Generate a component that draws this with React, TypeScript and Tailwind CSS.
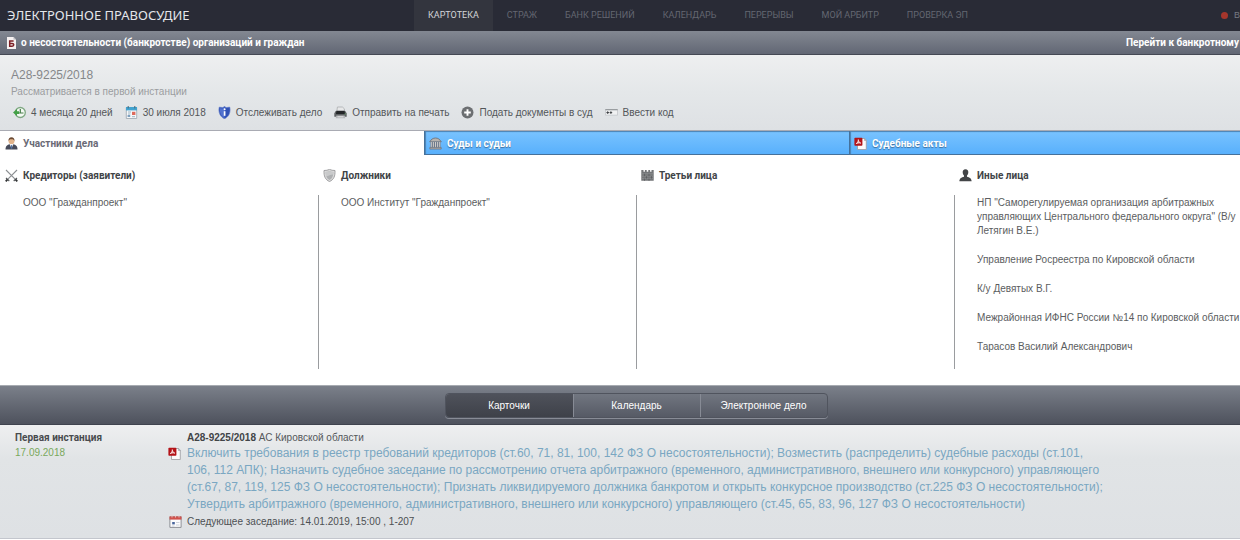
import type { ReactNode } from 'react'
import clsx from 'clsx'

const NAV = ['КАРТОТЕКА', 'СТРАЖ', 'БАНК РЕШЕНИЙ', 'КАЛЕНДАРЬ', 'ПЕРЕРЫВЫ', 'МОЙ АРБИТР', 'ПРОВЕРКА ЭП']

function Icon({ children, className }: { children: ReactNode; className?: string }) {
  return (
    <svg viewBox="0 0 13 13" aria-hidden="true" className={clsx('h-[13px] w-[13px] shrink-0', className)}>
      {children}
    </svg>
  )
}

function BankruptIcon() {
  return (
    <svg viewBox="0 0 9 12" aria-hidden="true" className="h-3 w-[9px] shrink-0">
      <path d="M0 0h6.5L9 2.5V12H0z" fill="#f6f1f1" />
      <path d="M6.5 0L9 2.5H6.5z" fill="#b9b9c0" />
      <path d="M6.6 3.9H2.7v5.3h2.4c2.2 0 2.2-2.8 0-2.8H2.7" fill="none" stroke="#7d2026" strokeWidth="1.5" />
    </svg>
  )
}

function HistoryIcon() {
  return (
    <Icon>
      <circle cx="7.3" cy="6.5" r="5" fill="#f4faf4" stroke="#7fa882" strokeWidth="1.3" />
      <path d="M7.3 3v4.5M5.5 7h5" fill="none" stroke="#467d49" strokeWidth="1.2" />
      <path d="M0 6.5L4 3v2.2h2v2.7H4V10z" fill="#43a047" />
    </Icon>
  )
}

function DateIcon() {
  return (
    <Icon>
      <path d="M1.3 1.5h10.4v11H1.3z" fill="#f5f7f9" stroke="#9aa4ad" strokeWidth="0.8" />
      <path d="M1 1h11v3.4H1z" fill="#42a3cf" />
      <path d="M3.2 0v2.4M9.8 0v2.4" stroke="#4c6675" strokeWidth="1" />
      <path d="M3 6h3M3 8h2.4M7 10.7h3" stroke="#9db4c3" strokeWidth="1" />
      <path d="M7 5.8h3.4V9H7z" fill="#dd6a5c" />
      <path d="M2.6 9h2.6v2H2.6z" fill="#7d9fbe" />
    </Icon>
  )
}

function GuardIcon() {
  return (
    <Icon>
      <path d="M6.5.3L8 1.6l3.8-.5C13 6.5 10.7 11 6.5 12.8 2.3 11 0 6.5 1.2 1.1L5 1.6z" fill="#3152b5" stroke="#6b84cf" strokeWidth="0.6" />
      <path d="M6.5 1v11C3.3 10.6 1.5 7 2 2.2l3 .4z" fill="#5272cf" />
      <path d="M6.6 5.2v4.6" fill="none" stroke="#fff" strokeWidth="1.7" />
      <circle cx="6.6" cy="3.3" r="1" fill="#fff" />
    </Icon>
  )
}

function PrinterIcon() {
  return (
    <Icon>
      <path d="M3.4 1h5l2 1.8v3H2.8z" fill="#e6e7e8" stroke="#a5a7a9" strokeWidth="0.7" />
      <path d="M1.4 5.2h10.2l1.1 2.2v3.4H.3V7.4z" fill="#5f6264" />
      <path d="M2.4 4.8h8.2l.4 3.2H2z" fill="#242628" />
      <path d="M2.4 9.4h8.2l.7 2.8H1.7z" fill="#b5b7ba" />
      <path d="M3.6 10.8h5.8" stroke="#e7e7e7" strokeWidth="0.9" />
      <path d="M10.6 8h1.2" stroke="#68b46a" strokeWidth="0.8" />
    </Icon>
  )
}

function AddIcon() {
  return (
    <Icon>
      <circle cx="6.5" cy="6.5" r="6" fill="#6c6f72" />
      <path d="M6.5 3.2v6.6M3.2 6.5h6.6" stroke="#fff" strokeWidth="1.9" />
    </Icon>
  )
}

function CodeIcon() {
  return (
    <Icon>
      <path d="M.5 3.8h12v5.4H.5z" fill="#f0f1f2" stroke="#c4c7ca" strokeWidth="0.8" />
      <path d="M.3 3.7h12.4" stroke="#85888b" strokeWidth="0.9" />
      <path d="M1.4 6.6H4M4.6 6.6h2.6M2.7 5.3v2.6M5.9 5.3v2.6" stroke="#3f4245" strokeWidth="1" />
    </Icon>
  )
}

function PersonIcon() {
  return (
    <Icon>
      <path d="M.5 12.5c0-3.5 2-4.8 4-5.2h4c2 .4 4 1.7 4 5.2z" fill="#474b5a" />
      <path d="M4.6 7l1.9 4.5L8.4 7z" fill="#f3f3f5" />
      <path d="M6.1 8h.8l.5 3.6h-1.8z" fill="#4f74a8" />
      <circle cx="6.5" cy="4.2" r="2.9" fill="#e3b58c" />
      <path d="M3.5 4.3C3.2 1.4 4.6.3 6.5.3s3.3 1.1 3 4c-.6-1.5-1.2-2-3-2s-2.4.5-3 2z" fill="#6b4a33" />
    </Icon>
  )
}

function CourtIcon() {
  return (
    <Icon>
      <path d="M.7 4.8C2 2.5 4 1 6.5 1s4.5 1.5 5.8 3.8z" fill="#b7b3ae" stroke="#6a6a70" strokeWidth="0.8" />
      <path d="M1.4 5h10.2v5.4H1.4z" fill="#6d7a8c" />
      <path d="M2.3 5v5.6M4.4 5v5.6M6.5 5v5.6M8.6 5v5.6M10.7 5v5.6" stroke="#cfccc8" strokeWidth="1" />
      <path d="M.8 10.4h11.4v1.7H.8z" fill="#aaa6a2" stroke="#686a70" strokeWidth="0.6" />
    </Icon>
  )
}

function PdfIcon() {
  return (
    <Icon>
      <path d="M3.5 1.5h7.2l1.6 1.8v9.2H3.5z" fill="#fafafa" stroke="#9a9aa0" strokeWidth="0.8" />
      <path d="M10.5 1.5v2h2" fill="none" stroke="#9a9aa0" strokeWidth="0.7" />
      <rect x="0.4" y="0.7" width="8" height="8" rx="0.8" fill="#b41318" />
      <path d="M2.2 6.6C3.7 5.7 4.3 4.3 4.3 2.6c.3 1.7 1 2.8 2.5 3.6-1.7-.4-3.1-.2-4.6.4z" fill="#e9a3a3" stroke="#fff" strokeWidth="0.7" />
    </Icon>
  )
}

function SwordsIcon() {
  return (
    <Icon>
      <path d="M1 1l9.6 9.6M12 1l-9.6 9.6" stroke="#8c8f92" strokeWidth="1.1" />
      <path d="M1 9l3.3 3M12 9l-3.3 3" stroke="#55585b" strokeWidth="1.1" />
      <path d="M.7 12.3l1.7-1.7M12.3 12.3l-1.7-1.7" stroke="#303234" strokeWidth="1.8" />
    </Icon>
  )
}

function ShieldIcon() {
  return (
    <Icon>
      <path d="M1 1.5C3 1.500 5 1.200 6.500.4 8 1.200 10 1.500 12 1.500c.3 5.500-1.200 9.300-5.500 11C2.200 10.800.7 7 1 1.500z" fill="#dadada" stroke="#98999b" strokeWidth="0.9" />
      <path d="M2.7 3c1.500 0 2.700-.3 3.800-.8 1.100.5 2.300.8 3.800.8 0 4-.9 6.500-3.800 7.900C3.600 9.500 2.700 7 2.700 3z" fill="#aeb0b2" />
      <path d="M2.7 3c1.500 0 2.700-.3 3.800-.8 1.100.5 2.300.8 3.800.8v2.400c-2.700.3-4.600.9-7.400 2.400z" fill="#c9cacb" />
    </Icon>
  )
}

function CastleIcon() {
  return (
    <Icon>
      <path d="M.3 1h2.200v1.800h1.400V1h1.800v1.800h1.600V1h1.800v1.800h1.400V1h2.200v10.800H.3z" fill="#747678" />
      <path d="M.3 4.8h12.4M.3 7.2h12.4M.3 9.6h12.4" stroke="#97999b" strokeWidth="0.6" />
      <path d="M3.5 4.8v2.4M8 4.8v2.4M5.5 7.2v2.4M10.5 7.2v2.4M3.5 9.6v2.2M8 9.6v2.2" stroke="#55575a" strokeWidth="0.7" />
    </Icon>
  )
}

function OtherIcon() {
  return (
    <Icon>
      <path d="M6.5.3c2 0 3 1.300 2.800 3.200-.1 1.400-.6 2.300-1.300 3v1.200c2.400.6 4.600 1.500 4.600 4.600H.4c0-3.100 2.200-4 4.600-4.600V6.500c-.7-.7-1.200-1.600-1.300-3C3.500 1.600 4.500.3 6.500.3z" fill="#434547" />
    </Icon>
  )
}

function SessionIcon() {
  return (
    <Icon>
      <path d="M.9 1.8h11.2v10.6H.9z" fill="#fbfbfc" stroke="#83868c" strokeWidth="0.9" />
      <path d="M.5 1.4h12v3.2H.5z" fill="#d0524c" />
      <path d="M3 .2v2.400M6.500.2v2.400M10 .2v2.400" stroke="#f0cfcd" strokeWidth="0.8" />
      <path d="M3.2 7h2.600v2.400H3.200z" fill="#48659b" />
      <path d="M7 7.5h3.500M7 10h3.500M3 11h2.500" stroke="#c4c9d3" strokeWidth="0.8" />
    </Icon>
  )
}

const ACTIONS = [
  { icon: <HistoryIcon />, label: '4 месяца 20 дней' },
  { icon: <DateIcon />, label: '30 июля 2018' },
  { icon: <GuardIcon />, label: 'Отслеживать дело' },
  { icon: <PrinterIcon />, label: 'Отправить на печать' },
  { icon: <AddIcon />, label: 'Подать документы в суд' },
  { icon: <CodeIcon />, label: 'Ввести код' },
]

const TABS = [
  { icon: <PersonIcon />, label: 'Участники дела' },
  { icon: <CourtIcon />, label: 'Суды и судьи' },
  { icon: <PdfIcon />, label: 'Судебные акты' },
]

const PARTIES = [
  { icon: <SwordsIcon />, title: 'Кредиторы (заявители)', names: ['ООО "Гражданпроект"'] },
  { icon: <ShieldIcon />, title: 'Должники', names: ['ООО Институт "Гражданпроект"'] },
  { icon: <CastleIcon />, title: 'Третьи лица', names: [] },
  {
    icon: <OtherIcon />,
    title: 'Иные лица',
    names: [
      'НП "Саморегулируемая организация арбитражных\nуправляющих Центрального федерального округа" (В/у\nЛетягин В.Е.)',
      'Управление Росреестра по Кировской области',
      'К/у Девятых В.Г.',
      'Межрайонная ИФНС России №14 по Кировской области',
      'Тарасов Василий Александрович',
    ],
  },
]

const VIEWS = ['Карточки', 'Календарь', 'Электронное дело']

function TopNav() {
  return (
    <header className="flex h-[31px] items-center overflow-hidden bg-[#292b36] whitespace-nowrap">
      <a href="#" className="w-[414px] shrink-0 pl-[7px] font-['Noto_Sans',sans-serif] text-[13px] text-[#e4e6ea]">
        ЭЛЕКТРОННОЕ ПРАВОСУДИЕ
      </a>
      <nav className="flex h-full font-[Roboto,sans-serif] text-[9px]">
        {NAV.map((item, i) => (
          <a
            key={item}
            href="#"
            className={clsx('flex items-center px-[14px]', i === 0 ? 'bg-[#33353e] text-[#d3d5d9]' : 'text-[#646771]')}
          >
            {item}
          </a>
        ))}
      </nav>
      <a href="#" className="ml-auto flex items-center gap-[6px] text-[9px] text-[#777a83]">
        <span className="h-[7px] w-[7px] rounded-full bg-[#a5362c]" />
        В
      </a>
    </header>
  )
}

function CaseHeader() {
  return (
    <section className="h-[76px] border-b border-[#a9abb3] bg-linear-to-b from-[#eeeff0] via-[#e4e7e9] to-[#dee1e4] px-[11px] pt-3">
      <h1 className="text-xs leading-4 text-[#85878a]">А28-9225/2018</h1>
      <p className="mt-[2px] text-[10px] leading-[14px] text-[#9b9da0]">Рассматривается в первой инстанции</p>
      <div className="mt-[7px] flex gap-3 pl-[2px] text-[10px] leading-[13px] text-[#535659]">
        {ACTIONS.map(action => (
          <button key={action.label} type="button" className="flex items-center gap-[5px] whitespace-nowrap">
            {action.icon}
            {action.label}
          </button>
        ))}
      </div>
    </section>
  )
}

function Tabs() {
  return (
    <div role="tablist" className="grid h-6 grid-cols-[424fr_425fr_391fr] font-[Roboto,sans-serif] text-[10px] font-bold">
      {TABS.map((tab, i) => (
        <button
          key={tab.label}
          type="button"
          role="tab"
          aria-selected={i === 0}
          className={clsx(
            'flex items-center gap-[5px]',
            i === 0
              ? 'bg-white pl-[5px] text-[#6a6a76]'
              : 'border-b border-l border-[#45719b] bg-linear-to-b from-[#79c3ff] to-[#58b0fc] pt-[2px] pl-1 text-white shadow-[inset_1px_1px_1px_#4c82b3] text-shadow-[0_1px_1px_#3c6f9e]'
          )}
        >
          {tab.icon}
          {tab.label}
        </button>
      ))}
    </div>
  )
}

function Parties() {
  return (
    <section className="grid grid-cols-[318fr_318fr_318fr_286fr] bg-white pt-[14px] pb-4">
      {PARTIES.map((party, i) => (
        <div key={party.title} className="flex min-w-0 flex-col">
          <h2 className="flex h-[13px] items-center gap-[5px] pl-[5px] font-[Roboto,sans-serif] text-[10px] font-bold text-[#414447]">
            {party.icon}
            {party.title}
          </h2>
          <ul
            className={clsx(
              'mt-[13px] flex h-[174px] flex-col gap-[15px] pt-px text-[10px] leading-[14px] whitespace-pre text-[#5b5d60]',
              i > 0 ? 'border-l border-[#9a9c9f] pl-[22px]' : 'pl-[23px]'
            )}
          >
            {party.names.map(name => (
              <li key={name}>
                <a href="#">{name}</a>
              </li>
            ))}
          </ul>
        </div>
      ))}
    </section>
  )
}

function ViewSwitch() {
  return (
    <div className="flex h-10 items-center justify-center border-t border-b border-t-[#a7abb1] border-b-[#3f434e] bg-linear-to-b from-[#7b808a] to-[#4e525d] pl-8">
      <div className="flex h-[25px] rounded-sm border border-[#50545e] text-[10px] text-white shadow-[0_1px_0_#888c96]">
        {VIEWS.map((view, i) => (
          <button
            key={view}
            type="button"
            aria-pressed={i === 0}
            className={clsx(
              'w-[127px]',
              i === 0 ? 'rounded-l-sm bg-linear-to-b from-[#4f525b] to-[#3e4149]' : 'border-l border-[#878b95]'
            )}
          >
            {view}
          </button>
        ))}
      </div>
    </div>
  )
}

function Instance() {
  return (
    <section className="flex border-b border-[#c3c6cd] bg-linear-to-b from-[#eeeff0] via-[#e1e4e6] via-30% to-[#dee1e4] pt-[5px] pb-[9px] text-[10px]">
      <div className="w-[168px] shrink-0 pl-[15px] leading-[15px] text-[#484b4e]">
        <h2 className="font-[Roboto,sans-serif] font-bold">Первая инстанция</h2>
        <p className="text-[#79a85c]">17.09.2018</p>
      </div>
      <div className="max-w-[935px]">
        <p className="pl-[19px] leading-[15px] text-[#55585b]">
          <b className="text-[#414447]">А28-9225/2018</b> АС Кировской области
        </p>
        <div className="flex gap-[6px]">
          <span className="pt-[2px]">
            <PdfIcon />
          </span>
          <a href="#" className="text-xs leading-[17px] text-[#7aa7c2]">
            Включить требования в реестр требований кредиторов (ст.60, 71, 81, 100, 142 ФЗ О несостоятельности); Возместить
            (распределить) судебные расходы (ст.101, 106, 112 АПК); Назначить судебное заседание по рассмотрению отчета
            арбитражного (временного, административного, внешнего или конкурсного) управляющего (ст.67, 87, 119, 125 ФЗ О
            несостоятельности); Признать ликвидируемого должника банкротом и открыть конкурсное производство (ст.225 ФЗ О
            несостоятельности); Утвердить арбитражного (временного, административного, внешнего или конкурсного) управляющего
            (ст.45, 65, 83, 96, 127 ФЗ О несостоятельности)
          </a>
        </div>
        <p className="mt-px flex items-center gap-[5px] pl-px leading-[15px] text-[#4d5053]">
          <SessionIcon />
          Следующее заседание: 14.01.2019, 15:00 , 1-207
        </p>
      </div>
    </section>
  )
}

export default function App() {
  return (
    <div className="overflow-hidden bg-white font-['Liberation_Sans',Arial,sans-serif]">
      <TopNav />
      <div className="flex h-6 items-center gap-[5px] border-b border-[#454954] bg-linear-to-b from-[#838892] to-[#626774] pr-px pl-[7px] font-[Roboto,sans-serif] text-[10px] font-bold whitespace-nowrap text-white">
        <BankruptIcon />
        <span>о несостоятельности (банкротстве) организаций и граждан</span>
        <a href="#" className="ml-auto">
          Перейти к банкротному
        </a>
      </div>
      <CaseHeader />
      <Tabs />
      <Parties />
      <ViewSwitch />
      <Instance />
    </div>
  )
}
